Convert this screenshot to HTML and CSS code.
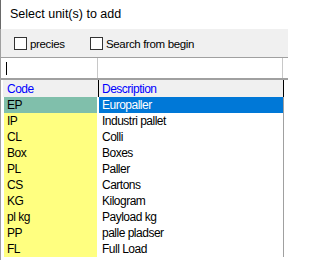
FILE: index.html
```html
<!DOCTYPE html>
<html>
<head>
<meta charset="utf-8">
<link rel="stylesheet" href="styles.css">
</head>
<body>
<div class="win">
  <div class="title">Select unit(s) to add</div>
  <div class="opts">
    <label class="chk first"><span class="box"></span><span class="lbl">precies</span></label>
    <label class="chk"><span class="box"></span><span class="lbl">Search from begin</span></label>
  </div>
  <div class="filter">
    <div class="fcode"><span class="caret"></span></div>
    <div class="fdesc"></div>
  </div>
  <div class="grid">
    <div class="hdr"><div class="c">Code</div><div class="d">Description</div></div>
    <div class="row sel"><div class="c">EP</div><div class="d">Europaller</div></div>
    <div class="row"><div class="c">IP</div><div class="d">Industri pallet</div></div>
    <div class="row"><div class="c">CL</div><div class="d">Colli</div></div>
    <div class="row"><div class="c">Box</div><div class="d">Boxes</div></div>
    <div class="row"><div class="c">PL</div><div class="d">Paller</div></div>
    <div class="row"><div class="c">CS</div><div class="d">Cartons</div></div>
    <div class="row"><div class="c">KG</div><div class="d">Kilogram</div></div>
    <div class="row"><div class="c">pl kg</div><div class="d">Payload kg</div></div>
    <div class="row"><div class="c">PP</div><div class="d">palle pladser</div></div>
    <div class="row"><div class="c">FL</div><div class="d">Full Load</div></div>
  </div>
</div>
</body>
</html>
```
FILE: styles.css
```css
html, body {
  margin: 0;
  padding: 0;
  background: #ffffff;
}
body {
  width: 288px;
  height: 260px;
  overflow: hidden;
  font-family: "Liberation Sans", Arial, sans-serif;
  color: #000000;
}
.win {
  height: 260px;
  border-left: 1px solid #a0a0a0;
}
.title {
  height: 29px;
  line-height: 29px;
  padding-left: 9px;
  font-size: 12.5px;
  border-left: 1px solid #6a6a6a;
  margin-left: -1px;
}
.opts {
  background: #f0f0f0;
  border-bottom: 1px solid #a0a0a0;
  display: flex;
  align-items: center;
  padding-left: 13px;
  padding-top: 1px;
  box-sizing: border-box;
  height: 29px;
}
.chk {
  display: flex;
  align-items: center;
  font-size: 11.5px;
  letter-spacing: -0.35px;
}
.chk.first {
  width: 76px;
}
.box {
  width: 11px;
  height: 11px;
  border: 1px solid #333333;
  background: #ffffff;
  margin-right: 3px;
}
.filter {
  display: flex;
  height: 20px;
  border-bottom: 2px solid #a0a0a0;
}
.fcode {
  width: 97px;
  border-right: 1px solid #c8c8c8;
  padding-left: 5px;
  padding-top: 4px;
  box-sizing: border-box;
}
.caret {
  display: block;
  width: 1px;
  height: 13px;
  background: #000000;
}
.fdesc {
  width: 184px;
  border-right: 1px solid #c8c8c8;
}
.grid {
  font-size: 12px;
  letter-spacing: -0.5px;
}
.hdr {
  display: flex;
  height: 17px;
  line-height: 19px;
  margin-left: 2px;
  color: #0000ff;
}
.hdr .c {
  width: 96px;
  box-sizing: border-box;
  padding-left: 4px;
  background: #f0f0f0;
  border-right: 1px solid #000000;
}
.hdr .d {
  width: 185px;
  box-sizing: border-box;
  padding-left: 3px;
  background: #f0f0f0;
  border-right: 1px solid #000000;
}
.row {
  display: flex;
  height: 16px;
  line-height: 17px;
  margin-left: 3px;
}
.row .c {
  width: 93px;
  margin-right: 2px;
  padding-left: 3px;
  box-sizing: border-box;
  background: #ffff80;
}
.row .d {
  width: 185px;
  box-sizing: border-box;
  padding-left: 3px;
  border-right: 1px solid #a0a0a0;
}
.row.sel .c {
  background: #80bfab;
}
.row.sel .d {
  background: #0078d7;
  color: #ffffff;
}
```
